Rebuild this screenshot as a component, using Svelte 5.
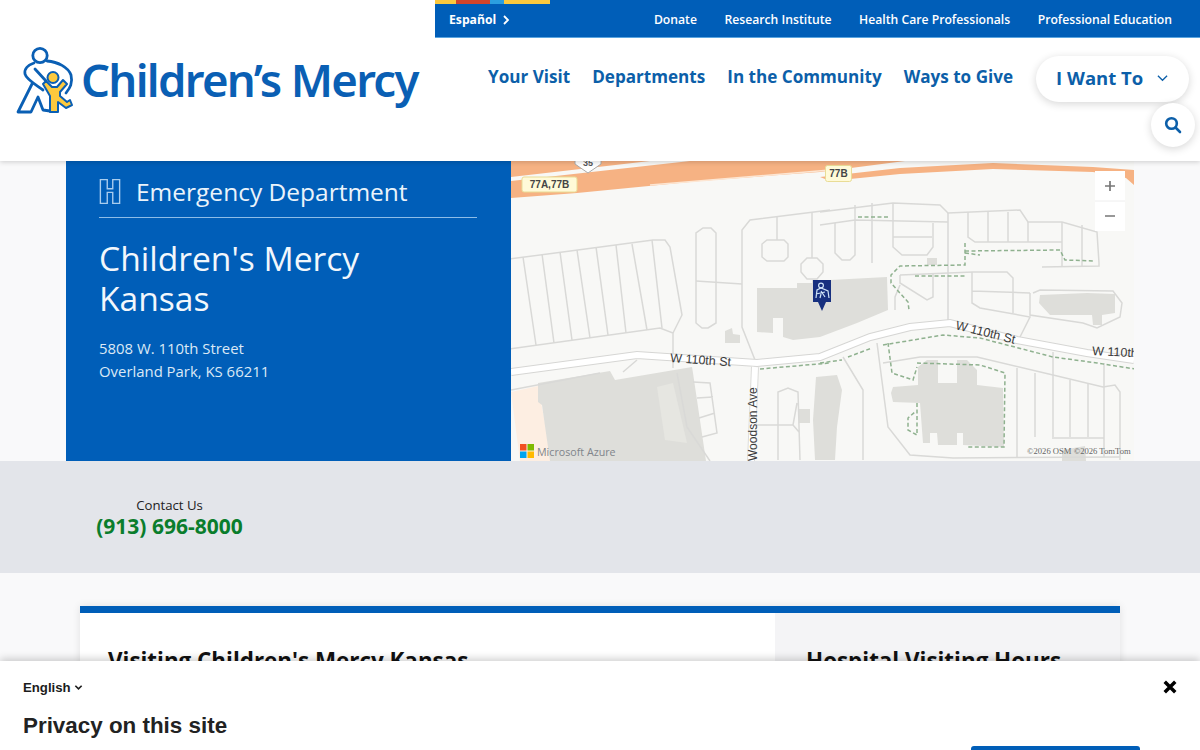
<script>
  const thin = [
    "M510,259 L653,240 L665,240 L670,247 L682,315 L673,333",
    "M510,349 L660,328 L673,333 L673,368",
    "M523,257L536,345 M542,254L554,343 M560,252L572,340 M577,250L590,338 M596,247L608,335 M616,245L626,333 M632,244L647,330 M652,240L662,328",
    "M703,228 L711,228 L716,233 L716,323 L708,328 L702,328 L696,323 L696,233 Z",
    "M696,281 L742,284",
    "M830,210 L750,220 L742,230 L742,327 L755,360",
    "M767,240 L784,240 L788,244 L788,257 L784,261 L767,261 L762,257 L762,244 Z",
    "M777,217 L777,240 M812,212 L812,258",
    "M807,258 L817,258 L823,264 L823,272 L817,279 L807,279 L801,272 L801,264 Z",
    "M820,212 L893,203 L940,205 L948,213 L1020,210 L1028,222 L1062,222 L1097,232 L1099,263 L1099,266 L1042,267",
    "M948,213 L948,323",
    "M820,225 L855,220 L948,222",
    "M855,205 L855,255 L850,260 L842,260 L835,253 L835,223",
    "M872,203 L872,263",
    "M893,203 L893,247 L902,255 L927,255 L933,247 L933,223 M893,237 L932,237",
    "M968,212 L968,237 L975,242 L1062,242 M988,212 L988,242 M1008,212 L1008,242 M1028,222 L1028,242 M1062,222 L1062,267 M1082,225 L1082,267",
    "M900,275 L973,272 L1007,272 L1013,278 L1013,313",
    "M972,272 L972,303 L980,308 L1030,317 L1020,337 M972,291 L1030,293",
    "M1033,293 L1040,290 L1113,291 L1122,303 L1120,317 L1097,328 L1083,323 L1030,315 L1030,293",
    "M900,275 L900,283 L927,300 L933,297 L933,273 M900,285 L895,297 L895,310",
    "M883,363 L920,357 L977,357 L1053,375 L1103,387 L1115,385 L1120,392 L1120,460",
    "M877,343 L888,427 L910,455 L953,458 L1120,457",
    "M1017,368 L1017,457 M1035,373 L1035,437 M1053,352 L1053,437 M1070,380 L1070,437 M1088,384 L1088,437 M1104,363 L1104,457 M1052,438 L1104,438",
    "M843,357 L863,390 L863,460",
    "M755,425 L793,425 M778,460 L778,392 L788,388 L798,392 L800,460 M797,403 L793,425 L799,432",
    "M693,382 L710,383 L717,433 L702,437 M697,398 L713,397 M699,418 L715,413",
    "M511,390 L600,373 M623,372 L637,360",
    "M677,373 L687,427 L710,461"
  ];
  const dashed = [
    "M858,217 L890,217",
    "M965,243 L965,265 L900,266 L891,275 L891,283 L908,302 L909,310",
    "M965,251 L1060,250 L1065,260 L1095,261",
    "M965,253 L980,255",
    "M915,276 L967,276",
    "M820,363 L842,360 M848,357 L872,348",
    "M883,345 L943,335 L980,338 L1053,357 L1097,363 L1135,369",
    "M888,343 L892,373 L913,380 L917,367",
    "M917,363 L980,365 L1005,373 L1004,447 L967,447",
    "M917,403 L917,435 L908,430 L908,418 L915,412",
    "M760,369 L830,363"
  ];
  const buildings = [
    "757,288 797,288 797,283 812,283 812,280 830,280 887,277 888,310 857,323 820,337 793,340 783,337 783,318 773,318 773,333 757,332",
    "538,383 610,371 615,380 692,367 693,373 706,461 550,461 542,405 538,402",
    "725,331 732,328 733,334 740,335 740,343 725,343",
    "799,409 810,409 810,423 799,423",
    "816,377 837,375 842,390 837,427 835,460 815,460 813,420",
    "893,387 918,385 918,367 927,360 938,360 938,383 957,383 957,360 967,360 977,370 977,385 1003,388 1004,447 963,445 963,433 957,433 957,445 938,445 937,433 930,433 930,443 923,443 920,403 893,402 891,393",
    "1040,295 1087,293 1115,294 1115,313 1102,315 1102,325 1093,325 1092,315 1050,315 1039,303",
    "927,258 937,258 937,265 927,265",
    "1062,450 1085,446 1086,461 1062,461"
  ];
  const nav = ["Your Visit", "Departments", "In the Community", "Ways to Give"];
  const util = ["Donate", "Research Institute", "Health Care Professionals", "Professional Education"];
</script>

<div class="page">
  <header class="header">
    <a class="logo" href="#top">
      <svg class="mark" viewBox="15 46 60 70" aria-hidden="true">
        <circle cx="40" cy="55.500" r="7.200" class="mark-line" />
        <path class="mark-line" d="M34,63 C28,65 24,69 25,74 C26,79 36,85 43,90 M35,69 L46,81 M47,61 C58,62 68,67 71,75 C73,83 70,88 66,93 M32,84 L18,112 L31,112 L38,97 L43,110 L50,111" />
        <path class="child" d="M43,84 L46,81 L52,87 L57,87 L63,80 L67,84 L60,92 L60,96 L67,102 L70,100 L72,105 L66,108 L58,102 L58,112 L50,112 L50,96 Z" />
        <circle cx="53" cy="77.500" r="5.500" class="child" />
      </svg>
      <span class="wordmark">Children’s Mercy</span>
    </a>
    <div class="head-right">
      <div class="strip"><i class="s1"></i><i class="s2"></i><i class="s3"></i><i class="s4"></i></div>
      <div class="topbar">
        <span class="lang">Español
          <svg viewBox="0 0 8 12" class="lang-arrow" aria-hidden="true"><path d="M2,2 L6,6 L2,10" /></svg>
        </span>
        <div class="util">
          {#each util as u}<a href="#top">{u}</a>{/each}
        </div>
      </div>
      <div class="mainnav">
        {#each nav as n}<a href="#top">{n}</a>{/each}
        <button class="want">I Want To
          <svg viewBox="0 0 12 8" class="want-arrow" aria-hidden="true"><path d="M1,1.500 L6,6.500 L11,1.500" /></svg>
        </button>
      </div>
      <div class="search-row">
        <button class="search" aria-label="Search">
          <svg viewBox="0 0 18 18" aria-hidden="true"><circle cx="7.500" cy="7.500" r="5.300" /><path d="M11.500,11.500 L16,16" /></svg>
        </button>
      </div>
    </div>
  </header>

  <section class="hero">
    <div class="panel">
      <div class="dept">
        <svg viewBox="0 0 24 28" class="h-icon" aria-hidden="true">
          <path d="M1.500,1 H9 V11 H15 V1 H22.500 V27 H15 V15 H9 V27 H1.500 Z" />
        </svg>
        <span>Emergency Department</span>
      </div>
      <h1>Children's Mercy Kansas</h1>
      <p>5808 W. 110th Street<br />Overland Park, KS 66211</p>
    </div>
    <div class="map">
      <svg viewBox="511 161 623 300" class="map-svg" role="img" aria-label="Map of Children's Mercy Kansas">
        <rect x="511" y="161" width="623" height="300" fill="#f8f8f6" />
        <polygon points="511,392 538,386 552,461 520,461" fill="#fdeee2" />
        <!-- highway -->
        <polygon points="511,161 650,161 511,177" fill="#f6b283" />
        <polygon points="511,181 690,161 905,161 820,172 700,181 577,193 511,198" fill="#f6b283" />
        <path d="M650,185 L830,170" stroke="#fde6d3" stroke-width="1.500" />
        <polygon points="820,177 900,168 993,163 1093,167 1134,170 1134,185 1126,178 1093,172 993,169 900,174 830,181" fill="#f6b283" />
        {#each buildings as b}<polygon points={b} class="bld" />{/each}
        <polygon points="657,387 673,383 687,443 665,440" fill="#e6e6e1" />
        {#each thin as d}<path {d} class="thin" />{/each}
        <path class="road-out" d="M511,372 L637,355 L757,363 L820,357 L870,337 L910,327 L950,323 L1017,340 L1087,353 L1134,360" />
        <path class="road-in" d="M511,372 L637,355 L757,363 L820,357 L870,337 L910,327 L950,323 L1017,340 L1087,353 L1134,360" />
        <path class="ave-out" d="M755,367 L751,461" />
        <path class="ave-in" d="M755,367 L751,461" />
        {#each dashed as d}<path {d} class="dash" />{/each}

        <text x="670" y="362" transform="rotate(4 670 362)" class="lbl">W 110th St</text>
        <text x="955" y="329" transform="rotate(14 955 329)" class="lbl">W 110th St</text>
        <text x="1092" y="355" transform="rotate(3 1092 355)" class="lbl">W 110th</text>
        <text x="757" y="461" transform="rotate(-90 757 461)" class="lbl lbl-ave">Woodson Ave</text>

        <path d="M575,155 H601 V164 L588,173 L575,164 Z" fill="#fff" stroke="#aaa" />
        <text x="588" y="166" class="shield">35</text>
        <rect x="522" y="177" width="55" height="15" rx="2" class="exit" />
        <text x="549.500" y="188" class="exit-t">77A,77B</text>
        <rect x="825.500" y="165.500" width="26" height="16" rx="2" class="exit" />
        <text x="838.500" y="177" class="exit-t">77B</text>

        <!-- marker -->
        <path d="M813,280 H831 V302 H826 L822,311 L818,302 H813 Z" fill="#17307f" />
        <g class="pin">
          <circle cx="821" cy="285.500" r="2.400" />
          <path d="M816,298 L817,290 L821,288 L828,291 L829,298 M821,291 L825,297 M816,294 L825,292 M820,298 L821,294" />
        </g>

        <rect x="1095" y="171" width="30" height="60" fill="#fff" />
        <path d="M1095,201 H1125" stroke="#eee" />
        <path d="M1105,186 H1115 M1110,181 V191 M1105,216 H1115" stroke="#777" stroke-width="1.700" />

        <rect x="520" y="444" width="6.500" height="6.500" fill="#f25022" />
        <rect x="527.500" y="444" width="6.500" height="6.500" fill="#7fba00" />
        <rect x="520" y="451.500" width="6.500" height="6.500" fill="#00a4ef" />
        <rect x="527.500" y="451.500" width="6.500" height="6.500" fill="#ffb900" />
        <text x="537" y="455.500" class="azure">Microsoft Azure</text>
        <text x="1027" y="454" class="copy">©2026 OSM ©2026 TomTom</text>
      </svg>
    </div>
  </section>

  <section class="contact">
    <div class="contact-box">
      <div class="contact-label">Contact Us</div>
      <a class="phone" href="#top">(913) 696-8000</a>
    </div>
  </section>

  <section class="content">
    <div class="card">
      <div class="col-main"><h2>Visiting Children's Mercy Kansas</h2></div>
      <div class="col-side"><h2>Hospital Visiting Hours</h2></div>
    </div>
  </section>

  <aside class="banner">
    <div class="banner-top">
      <span class="english">English
        <svg viewBox="0 0 10 7" class="en-arrow" aria-hidden="true"><path d="M1.500,1.500 L5,5 L8.500,1.500" /></svg>
      </span>
      <button class="close" aria-label="Close">
        <svg viewBox="0 0 12 12" aria-hidden="true"><path d="M1.500,1.500 L10.500,10.500 M10.500,1.500 L1.500,10.500" /></svg>
      </button>
    </div>
    <div class="banner-body">
      <h3>Privacy on this site</h3>
      <div class="accept"></div>
    </div>
  </aside>
</div>

<style>
  :global(body) { margin: 0; background: #f9f9fa; font-family: "Open Sans", sans-serif; }
  .page { position: relative; width: 1200px; height: 750px; overflow: hidden; background: #f9f9fa; }
  a { text-decoration: none; color: inherit; }
  button { font: inherit; border: 0; padding: 0; }

  .header { position: relative; z-index: 2; display: flex; height: 161px; background: #fff; box-shadow: 0 1px 5px rgba(0,0,0,.18); }
  .logo { width: 435px; flex: none; display: flex; align-items: flex-start; padding: 46px 0 0 15px; box-sizing: border-box; }
  .mark { width: 60px; height: 70px; flex: none; }
  .mark-line { fill: none; stroke: #0a5fb4; stroke-width: 2.800; stroke-linejoin: round; stroke-linecap: round; }
  .child { fill: #fcc93e; stroke: #0a5fb4; stroke-width: 2; stroke-linejoin: round; }
  .wordmark { font-family: "Noto Sans", sans-serif; font-weight: 600; font-size: 45.500px; line-height: 70px; color: #0a5fb4; letter-spacing: -1.700px; margin: -2px 0 0 6px; white-space: nowrap; }

  .head-right { flex: 1; display: flex; flex-direction: column; min-width: 0; }
  .strip { display: flex; height: 4px; position: relative; z-index: 1; margin-bottom: -4px; width: 115px; }
  .strip i { display: block; height: 4px; }
  .s1 { width: 21px; background: #fcc93e; }
  .s2 { width: 34px; background: #d2442a; }
  .s3 { width: 14px; background: #2b9fe0; }
  .s4 { width: 46px; background: #fcc93e; }
  .topbar { height: 38px; flex: none; background: #005eb8; border-bottom: 1px solid #5aa5e0; display: flex; align-items: center; justify-content: space-between; padding: 2px 28px 0 14px; box-sizing: border-box; color: #fff; font-size: 12.200px; font-weight: 600; }
  .lang { font-weight: 700; display: flex; align-items: center; gap: 6px; }
  .lang-arrow { width: 8px; height: 12px; fill: none; stroke: #fff; stroke-width: 1.800; }
  .util { display: flex; gap: 27.500px; }

  .mainnav { display: flex; align-items: flex-start; padding: 18px 10px 0 53px; gap: 22px; color: #0c5fa9; font-size: 17.100px; font-weight: 700; line-height: 42px; white-space: nowrap; }
  .mainnav a { display: block; }
  .want { width: 153px; flex: none; height: 46px; border-radius: 23px; background: #fff; box-shadow: 0 2px 8px rgba(0,0,0,.16); color: #0c5fa9; font-weight: 700; font-size: 18.500px; display: flex; align-items: center; justify-content: flex-start; padding: 0 0 2px 20px; gap: 14px; box-sizing: border-box; margin-left: 1px; }
  .want-arrow { width: 11px; height: 8px; fill: none; stroke: #0c5fa9; stroke-width: 1.400; }
  .search-row { display: flex; justify-content: flex-end; padding: 1px 5px 0 0; }
  .search { width: 44px; height: 44px; border-radius: 50%; background: #fff; box-shadow: 0 2px 8px rgba(0,0,0,.16); display: flex; align-items: center; justify-content: center; }
  .search svg { width: 18px; height: 18px; fill: none; stroke: #0c5fa9; stroke-width: 2.600; stroke-linecap: round; }

  .hero { display: flex; height: 300px; padding-left: 66px; }
  .panel { width: 445px; flex: none; background: #005eb8; color: #fff; padding: 0 34px 0 33px; box-sizing: border-box; }
  .dept { display: flex; align-items: center; gap: 15px; border-bottom: 1px solid #8dbde8; font-size: 24.500px; padding-top: 4px; height: 52px; color: #eaf3fb; }
  .h-icon { width: 22px; height: 27px; flex: none; fill: none; stroke: #a9cdee; stroke-width: 1.500; }
  h1 { margin: 20px 0 0; font-size: 33.600px; line-height: 40px; font-weight: 400; width: 300px; color: #f2f7fc; }
  .panel p { margin: 19px 0 0; font-size: 14.900px; line-height: 22.500px; color: #dbe9f6; }
  .map { width: 623px; height: 300px; flex: none; overflow: hidden; }
  .map-svg { display: block; width: 623px; height: 300px; }
  .bld { fill: #dededa; }
  .thin { fill: none; stroke: #d9d9d7; stroke-width: 1.500; }
  .road-out { fill: none; stroke: #d6d6d4; stroke-width: 8; }
  .road-in { fill: none; stroke: #fff; stroke-width: 6; }
  .ave-out { fill: none; stroke: #dcdcda; stroke-width: 8; }
  .ave-in { fill: none; stroke: #fff; stroke-width: 6; }
  .dash { fill: none; stroke: #8fb18f; stroke-width: 1.500; stroke-dasharray: 4 2.500; }
  .lbl { font-family: "Liberation Sans", sans-serif; font-size: 12.500px; fill: #3c3c3c; }
  .lbl-ave { font-size: 12px; }
  .shield { font-family: "Liberation Sans", sans-serif; font-size: 9px; font-weight: 700; fill: #555; text-anchor: middle; }
  .exit { fill: #fffad8; stroke: #e9dc96; }
  .exit-t { font-family: "Liberation Sans", sans-serif; font-size: 10px; font-weight: 700; fill: #444; text-anchor: middle; }
  .pin { fill: none; stroke: #cfe3f7; stroke-width: 1.200; }
  .azure { font-family: "Open Sans", sans-serif; font-size: 10.700px; fill: #80858b; }
  .copy { font-family: "Liberation Serif", serif; font-size: 8.600px; fill: #666; }

  .contact { height: 112px; background: #e3e5ea; padding: 35px 0 0 96px; box-sizing: border-box; }
  .contact-box { width: 147px; text-align: center; }
  .contact-label { font-size: 13.200px; line-height: 18px; color: #222; }
  .phone { display: block; font-size: 21px; font-weight: 700; line-height: 25px; color: #0a7d2c; white-space: nowrap; }

  .content { padding: 33px 80px 0; }
  .card { display: flex; border-top: 7px solid #005eb8; height: 200px; box-shadow: 0 0 8px rgba(0,0,0,.1); }
  .col-main { width: 695px; flex: none; background: #fff; padding: 33px 28px; box-sizing: border-box; }
  .col-side { flex: 1; background: #f4f4f6; padding: 33px 31px; box-sizing: border-box; }
  h2 { margin: 0; font-size: 22.400px; line-height: 30px; font-weight: 700; color: #111; white-space: nowrap; }

  .banner { position: absolute; left: 0; right: 0; bottom: 0; height: 89px; background: #fff; box-shadow: 0 -2px 8px rgba(0,0,0,.2); z-index: 3; overflow: hidden; font-family: "Liberation Sans", sans-serif; color: #1c1c1c; }
  .banner-top { display: flex; justify-content: space-between; align-items: center; padding: 17px 23px 0; height: 18px; }
  .english { font-size: 13.200px; font-weight: 700; display: flex; align-items: center; gap: 3px; }
  .en-arrow { width: 9px; height: 7px; fill: none; stroke: #1c1c1c; stroke-width: 1.800; }
  .close { background: none; width: 14px; height: 14px; }
  .close svg { display: block; width: 14px; height: 14px; fill: none; stroke: #000; stroke-width: 3; }
  .banner-body { display: flex; justify-content: space-between; padding: 15px 60px 0 23px; }
  h3 { margin: 0; font-size: 22.400px; line-height: 30px; font-weight: 700; color: #222; }
  .accept { width: 169px; height: 40px; background: #005eb8; border-radius: 3px; margin-top: 35px; }
</style>
